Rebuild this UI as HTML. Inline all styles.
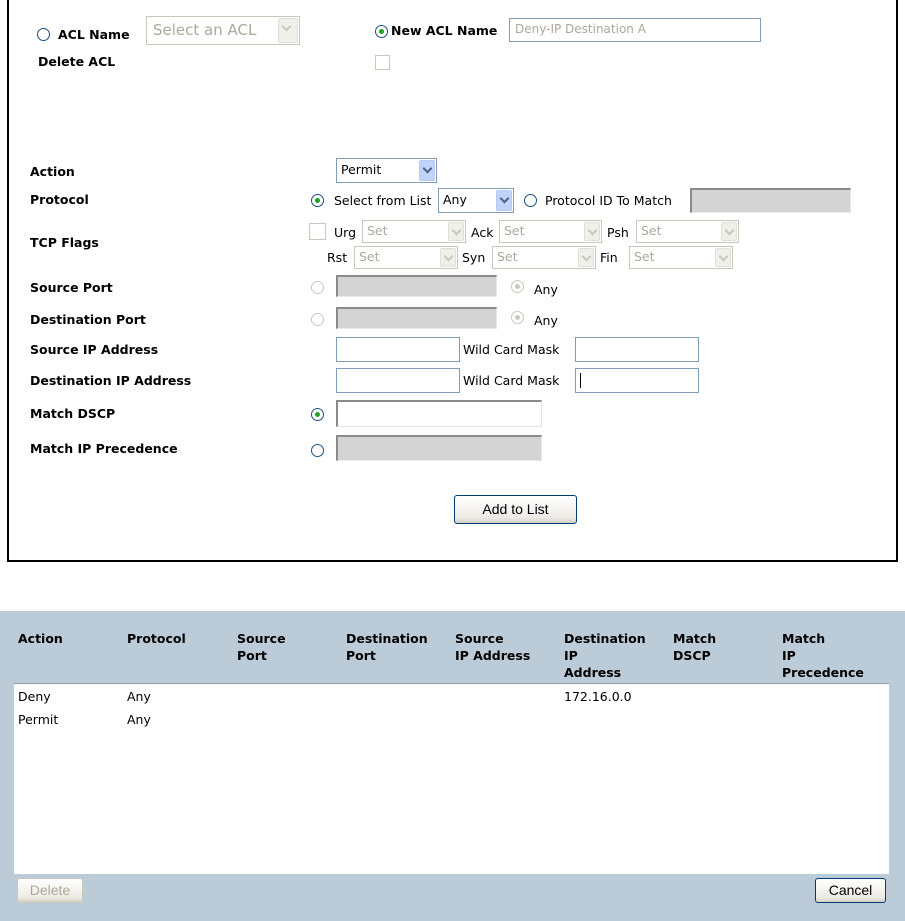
<!DOCTYPE html>
<html><head><style>
*{margin:0;padding:0;box-sizing:border-box}
body{width:905px;height:921px;background:#fff;position:relative;overflow:hidden;font-family:"DejaVu Sans","Liberation Sans",sans-serif;font-size:12.5px;color:#000}
.a{position:absolute;white-space:nowrap}
.b{font-weight:bold;font-size:12.5px}
.box{position:absolute;left:7px;top:-2px;width:891px;height:564px;border:2px solid #000}
.sel{position:absolute;border:1px solid #7f9db9;background:#fff;font-size:12.5px;padding:3px 4px;line-height:16px}
.sel .ar{position:absolute;right:1px;top:1px;bottom:1px;width:16px;background:#c1d3fb;border:1px solid #b9c9ef;border-radius:2px}
.sel .ar:after{content:"";position:absolute;left:4px;top:4px;width:5px;height:5px;border-right:2px solid #4d6185;border-bottom:2px solid #4d6185;transform:rotate(45deg)}
.sel.dis{border-color:#c9c7ba;color:#aca899}
.sel.dis .ar{background:#f0f0ea;border-color:#e0e0d8}
.sel.dis .ar:after{border-color:#c9c7ba}
.rad{position:absolute;width:13px;height:13px;border:1px solid #1c5180;border-radius:50%;background:#fff}
.rad.on:after{content:"";position:absolute;left:3px;top:3px;width:5px;height:5px;border-radius:50%;background:#21a121}
.rad.dis{border-color:#cac8bb}
.rad.dis.dot:after{content:"";position:absolute;left:3px;top:3px;width:5px;height:5px;border-radius:50%;background:#cac8bb}
.chk{position:absolute;width:15px;height:15px;border:1px solid #c9c7ba;background:#fff}
.in{position:absolute;border:1px solid #7f9db9;background:#fff}
.gr{position:absolute;background:#d4d4d4;border-top:2px solid #8a8a8a;border-left:2px solid #8a8a8a;border-bottom:1px solid #e8e8e8;border-right:1px solid #e8e8e8}
.btn{position:absolute;border:1px solid #003c74;border-radius:3px;background:linear-gradient(#fff,#ecebe6 80%,#d6d0c5);font-size:14px;font-family:"Liberation Sans",sans-serif;text-align:center}
.panel{position:absolute;left:0;top:611px;width:905px;height:310px;background:#bccbd8}
.list{position:absolute;left:14px;top:72px;width:875px;height:191px;background:#fff;border-top:1px solid #8fa0b0}
.h{position:absolute;top:19px;font-weight:bold;font-size:12.5px;line-height:17px}
</style></head><body>
<div class="box"></div>
<div class="rad" style="left:37px;top:28px"></div>
<div class="a b" style="left:58px;top:27px">ACL Name</div>
<div class="sel dis" style="left:146px;top:16px;width:154px;height:29px;font-size:15px;padding:5px 6px">Select an ACL<span class="ar" style="width:20px"></span></div>
<div class="a b" style="left:38px;top:54px">Delete ACL</div>
<div class="rad on" style="left:375px;top:25px"></div>
<div class="a b" style="left:391px;top:23px">New ACL Name</div>
<div class="in" style="left:509px;top:18px;width:252px;height:24px;color:#aca899;padding:3px 5px;font-size:12px">Deny-IP Destination A</div>
<div class="chk" style="left:375px;top:55px"></div>

<div class="a b" style="left:30px;top:164px">Action</div>
<div class="a b" style="left:30px;top:192px">Protocol</div>
<div class="a b" style="left:30px;top:235px">TCP Flags</div>
<div class="a b" style="left:30px;top:280px">Source Port</div>
<div class="a b" style="left:30px;top:312px">Destination Port</div>
<div class="a b" style="left:30px;top:342px">Source IP Address</div>
<div class="a b" style="left:30px;top:373px">Destination IP Address</div>
<div class="a b" style="left:30px;top:406px">Match DSCP</div>
<div class="a b" style="left:30px;top:441px">Match IP Precedence</div>

<div class="sel" style="left:336px;top:158px;width:101px;height:25px">Permit<span class="ar"></span></div>
<div class="rad on" style="left:311px;top:194px"></div>
<div class="a" style="left:334px;top:193px">Select from List</div>
<div class="sel" style="left:438px;top:188px;width:76px;height:25px">Any<span class="ar"></span></div>
<div class="rad" style="left:524px;top:194px"></div>
<div class="a" style="left:545px;top:193px">Protocol ID To Match</div>
<div class="gr" style="left:690px;top:188px;width:161px;height:25px"></div>

<div class="chk" style="left:309px;top:223px;width:17px;height:17px"></div>
<div class="a" style="left:334px;top:225px">Urg</div>
<div class="sel dis" style="left:362px;top:220px;width:104px;height:23px;padding:2px 4px">Set<span class="ar"></span></div>
<div class="a" style="left:471px;top:225px">Ack</div>
<div class="sel dis" style="left:499px;top:220px;width:103px;height:23px;padding:2px 4px">Set<span class="ar"></span></div>
<div class="a" style="left:607px;top:225px">Psh</div>
<div class="sel dis" style="left:636px;top:220px;width:103px;height:23px;padding:2px 4px">Set<span class="ar"></span></div>
<div class="a" style="left:327px;top:250px">Rst</div>
<div class="sel dis" style="left:354px;top:246px;width:104px;height:23px;padding:2px 4px">Set<span class="ar"></span></div>
<div class="a" style="left:462px;top:250px">Syn</div>
<div class="sel dis" style="left:492px;top:246px;width:104px;height:23px;padding:2px 4px">Set<span class="ar"></span></div>
<div class="a" style="left:600px;top:250px">Fin</div>
<div class="sel dis" style="left:629px;top:246px;width:104px;height:23px;padding:2px 4px">Set<span class="ar"></span></div>

<div class="rad dis" style="left:311px;top:281px"></div>
<div class="gr" style="left:336px;top:275px;width:161px;height:22px"></div>
<div class="rad dis dot" style="left:511px;top:280px"></div>
<div class="a" style="left:534px;top:282px">Any</div>
<div class="rad dis" style="left:311px;top:313px"></div>
<div class="gr" style="left:336px;top:307px;width:161px;height:22px"></div>
<div class="rad dis dot" style="left:511px;top:311px"></div>
<div class="a" style="left:534px;top:313px">Any</div>

<div class="in" style="left:336px;top:337px;width:124px;height:25px"></div>
<div class="a" style="left:463px;top:342px">Wild Card Mask</div>
<div class="in" style="left:575px;top:337px;width:124px;height:25px"></div>
<div class="in" style="left:336px;top:368px;width:124px;height:25px"></div>
<div class="a" style="left:463px;top:373px">Wild Card Mask</div>
<div class="in" style="left:575px;top:368px;width:124px;height:25px"><div style="position:absolute;left:4px;top:4px;width:1px;height:15px;background:#000"></div></div>

<div class="rad on" style="left:311px;top:408px"></div>
<div class="in" style="left:336px;top:400px;width:206px;height:27px;border:1px solid #e4e4e4;border-top:2px solid #8a8a8a;border-left:2px solid #8a8a8a"></div>
<div class="rad" style="left:311px;top:444px"></div>
<div class="gr" style="left:336px;top:435px;width:206px;height:26px"></div>

<div class="btn" style="left:454px;top:495px;width:123px;height:29px;line-height:27px">Add to List</div>

<div class="panel">
<div class="h" style="left:18px">Action</div>
<div class="h" style="left:127px">Protocol</div>
<div class="h" style="left:237px">Source<br>Port</div>
<div class="h" style="left:346px">Destination<br>Port</div>
<div class="h" style="left:455px">Source<br>IP Address</div>
<div class="h" style="left:564px">Destination<br>IP<br>Address</div>
<div class="h" style="left:673px">Match<br>DSCP</div>
<div class="h" style="left:782px">Match<br>IP<br>Precedence</div>
<div class="list">
<div class="a" style="left:4px;top:5px">Deny</div>
<div class="a" style="left:113px;top:5px">Any</div>
<div class="a" style="left:550px;top:5px">172.16.0.0</div>
<div class="a" style="left:4px;top:28px">Permit</div>
<div class="a" style="left:113px;top:28px">Any</div>
</div>
<div class="btn" style="left:17px;top:267px;width:66px;height:25px;line-height:23px;color:#aca899;border-color:#c9c7ba">Delete</div>
<div class="btn" style="left:815px;top:267px;width:71px;height:25px;line-height:23px">Cancel</div>
</div>
</body></html>
